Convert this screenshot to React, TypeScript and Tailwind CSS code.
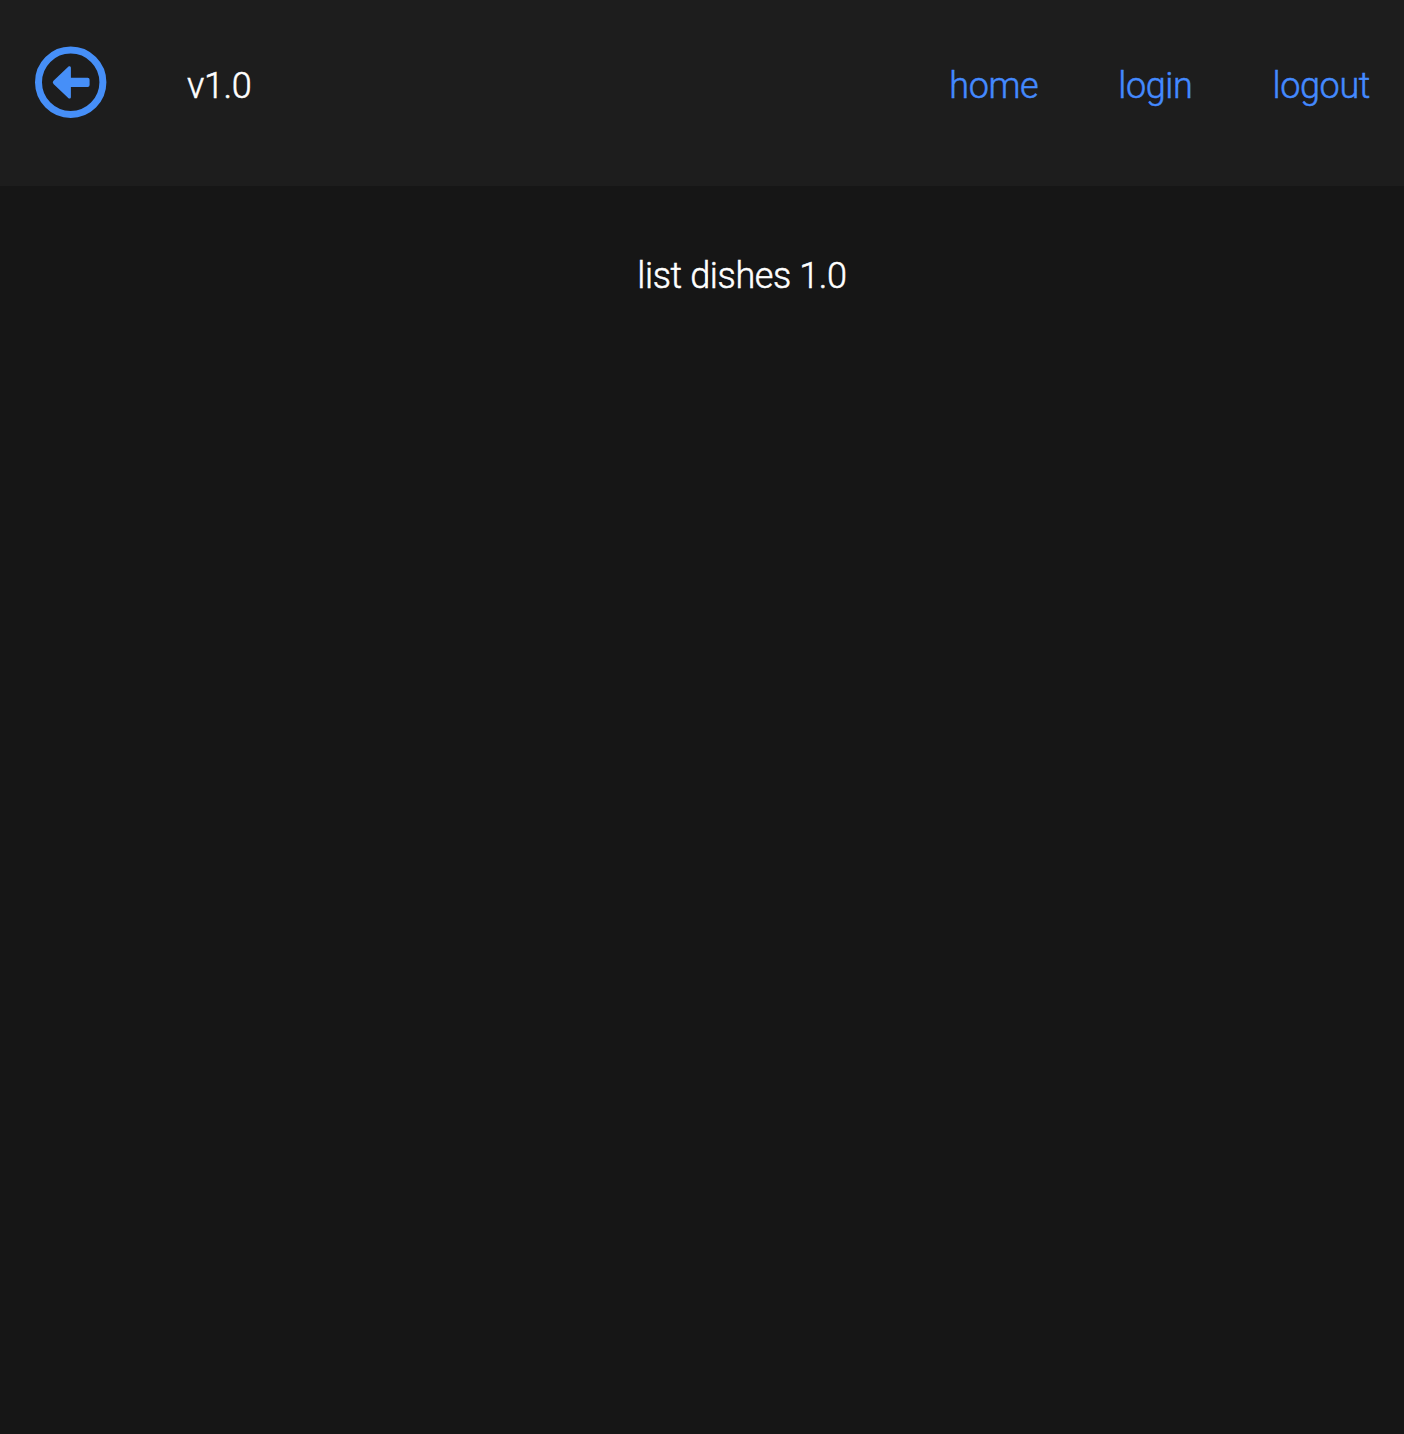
export default function App() {
  return (
    <div className="min-h-screen bg-[#161616] font-['Roboto',sans-serif] text-[36px] leading-[42px] font-light tracking-[-0.38px] text-white [-webkit-text-stroke:0.5px_currentColor]">
      <header className="flex h-[186px] items-start bg-[#1d1d1d] pr-[34px] pl-[35px]">
        <svg viewBox="0 0 72 72" className="mt-[46px] h-[72px] w-[72px]" aria-label="back">
          <circle cx="35.7" cy="36.3" r="32.2" fill="none" stroke="#468ff8" strokeWidth="7" />
          <path d="M18.5 34.8 33.5 20.6c1-.9 2.400-.3 2.400 1.200v9.900h16.700a2 2 0 0 1 2 2v5.300a2 2 0 0 1-2 2H35.900v10c0 1.500-1.400 2.100-2.400 1.200L18.500 37.900a2.200 2.200 0 0 1 0-3.100Z" fill="#468ff8" />
        </svg>
        <span className="mt-[65px] ml-[80px]">v1.0</span>
        <nav className="mt-[65px] ml-auto flex gap-[80px] text-[#448aff]">
          <a href="#">home</a>
          <a href="#">login</a>
          <a href="#">logout</a>
        </nav>
      </header>
      <main className="pt-[69px] pl-[80px] text-center">list dishes 1.0</main>
    </div>
  );
}
